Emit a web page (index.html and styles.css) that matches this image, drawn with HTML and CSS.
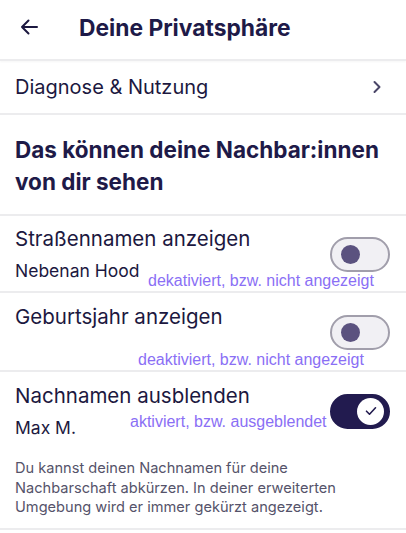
FILE: index.html
```html
<!DOCTYPE html>
<html lang="de">
<head>
    <meta charset="UTF-8">
    <meta name="viewport" content="width=device-width, initial-scale=1.0">
    <title>Deine Privatsphäre</title>
    <link rel="stylesheet" href="styles.css">
</head>
<body>
    <div class="app-bar">
        <svg class="back-icon" width="20" height="18" viewBox="0 0 20 18">
            <path d="M18 9H3M9.5 2.5L3 9l6.5 6.5" fill="none" stroke="#1c1840" stroke-width="2" stroke-linecap="round" stroke-linejoin="round"/>
        </svg>
        <h1 class="app-title">Deine Privatsphäre</h1>
    </div>

    <div class="link-row">
        <span>Diagnose &amp; Nutzung</span>
        <svg class="chevron" width="10" height="14" viewBox="0 0 10 14">
            <path d="M2.5 2l5 5-5 5" fill="none" stroke="#4a4668" stroke-width="2" stroke-linecap="round" stroke-linejoin="round"/>
        </svg>
    </div>

    <h2 class="section-title">Das können deine Nachbar:innen von dir sehen</h2>

    <div class="setting setting-street">
        <div class="setting-text">
            <div class="setting-label">Straßennamen anzeigen</div>
            <div class="setting-value">Nebenan Hood</div>
        </div>
        <div class="toggle"><span class="knob"></span></div>
        <span class="note note-street">dekativiert, bzw. nicht angezeigt</span>
    </div>

    <div class="setting setting-birth">
        <div class="setting-text">
            <div class="setting-label">Geburtsjahr anzeigen</div>
        </div>
        <div class="toggle"><span class="knob"></span></div>
        <span class="note note-birth">deaktiviert, bzw. nicht angezeigt</span>
    </div>

    <div class="setting setting-name">
        <div class="setting-main">
            <div class="setting-text">
                <div class="setting-label">Nachnamen ausblenden</div>
                <div class="setting-value">Max M.</div>
            </div>
            <div class="toggle on">
                <span class="knob">
                    <svg width="12" height="10" viewBox="0 0 12 10">
                        <path d="M1.5 5.2l3 3 6-6.4" fill="none" stroke="#221b4f" stroke-width="1.6" stroke-linecap="round" stroke-linejoin="round"/>
                    </svg>
                </span>
            </div>
        </div>
        <p class="setting-hint">Du kannst deinen Nachnamen für deine Nachbarschaft abkürzen. In deiner erweiterten Umgebung wird er immer gekürzt angezeigt.</p>
        <span class="note note-name">aktiviert, bzw. ausgeblendet</span>
    </div>
</body>
</html>
```

FILE: styles.css
```css
* {
    margin: 0;
    padding: 0;
    box-sizing: border-box;
}

body {
    font-family: 'Inter', 'Noto Sans', sans-serif;
    background-color: #ffffff;
    color: #1c1840;
}

.app-bar {
    height: 61px;
    display: flex;
    align-items: center;
    padding: 0 0 5px 19px;
    border-bottom: 2px solid #ececee;
    box-shadow: 0 1px 2px rgba(0, 0, 0, 0.04);
}

.back-icon {
    flex-shrink: 0;
}

.app-title {
    margin-left: 40px;
    font-size: 22.8px;
    font-weight: 700;
    color: #1e1a48;
}

.link-row {
    height: 54px;
    display: flex;
    align-items: center;
    justify-content: space-between;
    padding: 0 24px 0 15px;
    font-size: 20px;
    border-bottom: 2px solid #ececee;
}

.section-title {
    padding: 19px 20px 16px 15px;
    font-size: 22.5px;
    line-height: 32px;
    font-weight: 700;
    color: #1e1a48;
    border-bottom: 2px solid #ececee;
}

.setting {
    position: relative;
    display: flex;
    align-items: center;
    justify-content: space-between;
    padding: 11px 16px 0 15px;
    border-bottom: 2px solid #ececee;
}

.setting-street {
    height: 77px;
    padding-bottom: 10px;
}

.setting-birth {
    height: 79px;
    align-items: flex-start;
}

.setting-birth .toggle {
    margin-top: 11px;
}

.setting-name {
    display: block;
    padding-bottom: 10px;
}

.setting-main {
    display: flex;
    align-items: center;
    justify-content: space-between;
}

.setting-label {
    font-size: 20.5px;
    line-height: 26px;
}

.setting-value {
    margin-top: 8px;
    font-size: 17.5px;
    line-height: 22px;
}

.setting-hint {
    margin-top: 20px;
    padding-right: 30px;
    font-size: 14.6px;
    line-height: 19.5px;
    color: #55536a;
}

.toggle {
    width: 60px;
    height: 35px;
    flex-shrink: 0;
    display: flex;
    align-items: center;
    padding: 0 9px;
    border: 2px solid #a19eab;
    border-radius: 18px;
    background-color: #f1f0f4;
}

.knob {
    width: 19px;
    height: 19px;
    border-radius: 50%;
    background-color: #5b527f;
}

.toggle.on {
    justify-content: flex-end;
    padding: 0 4px;
    border-color: #221b4f;
    background-color: #221b4f;
}

.toggle.on .knob {
    width: 27px;
    height: 27px;
    display: flex;
    align-items: center;
    justify-content: center;
    background-color: #ffffff;
}

/* Anmerkungen über dem Screenshot */
.note {
    position: absolute;
    font-family: 'Liberation Sans', Arial, sans-serif;
    font-size: 16px;
    line-height: 18px;
    color: #8a6ff5;
    white-space: nowrap;
}

.note-street {
    left: 148px;
    top: 56px;
}

.note-birth {
    left: 138px;
    top: 58px;
}

.note-name {
    left: 130px;
    top: 41px;
}
```
